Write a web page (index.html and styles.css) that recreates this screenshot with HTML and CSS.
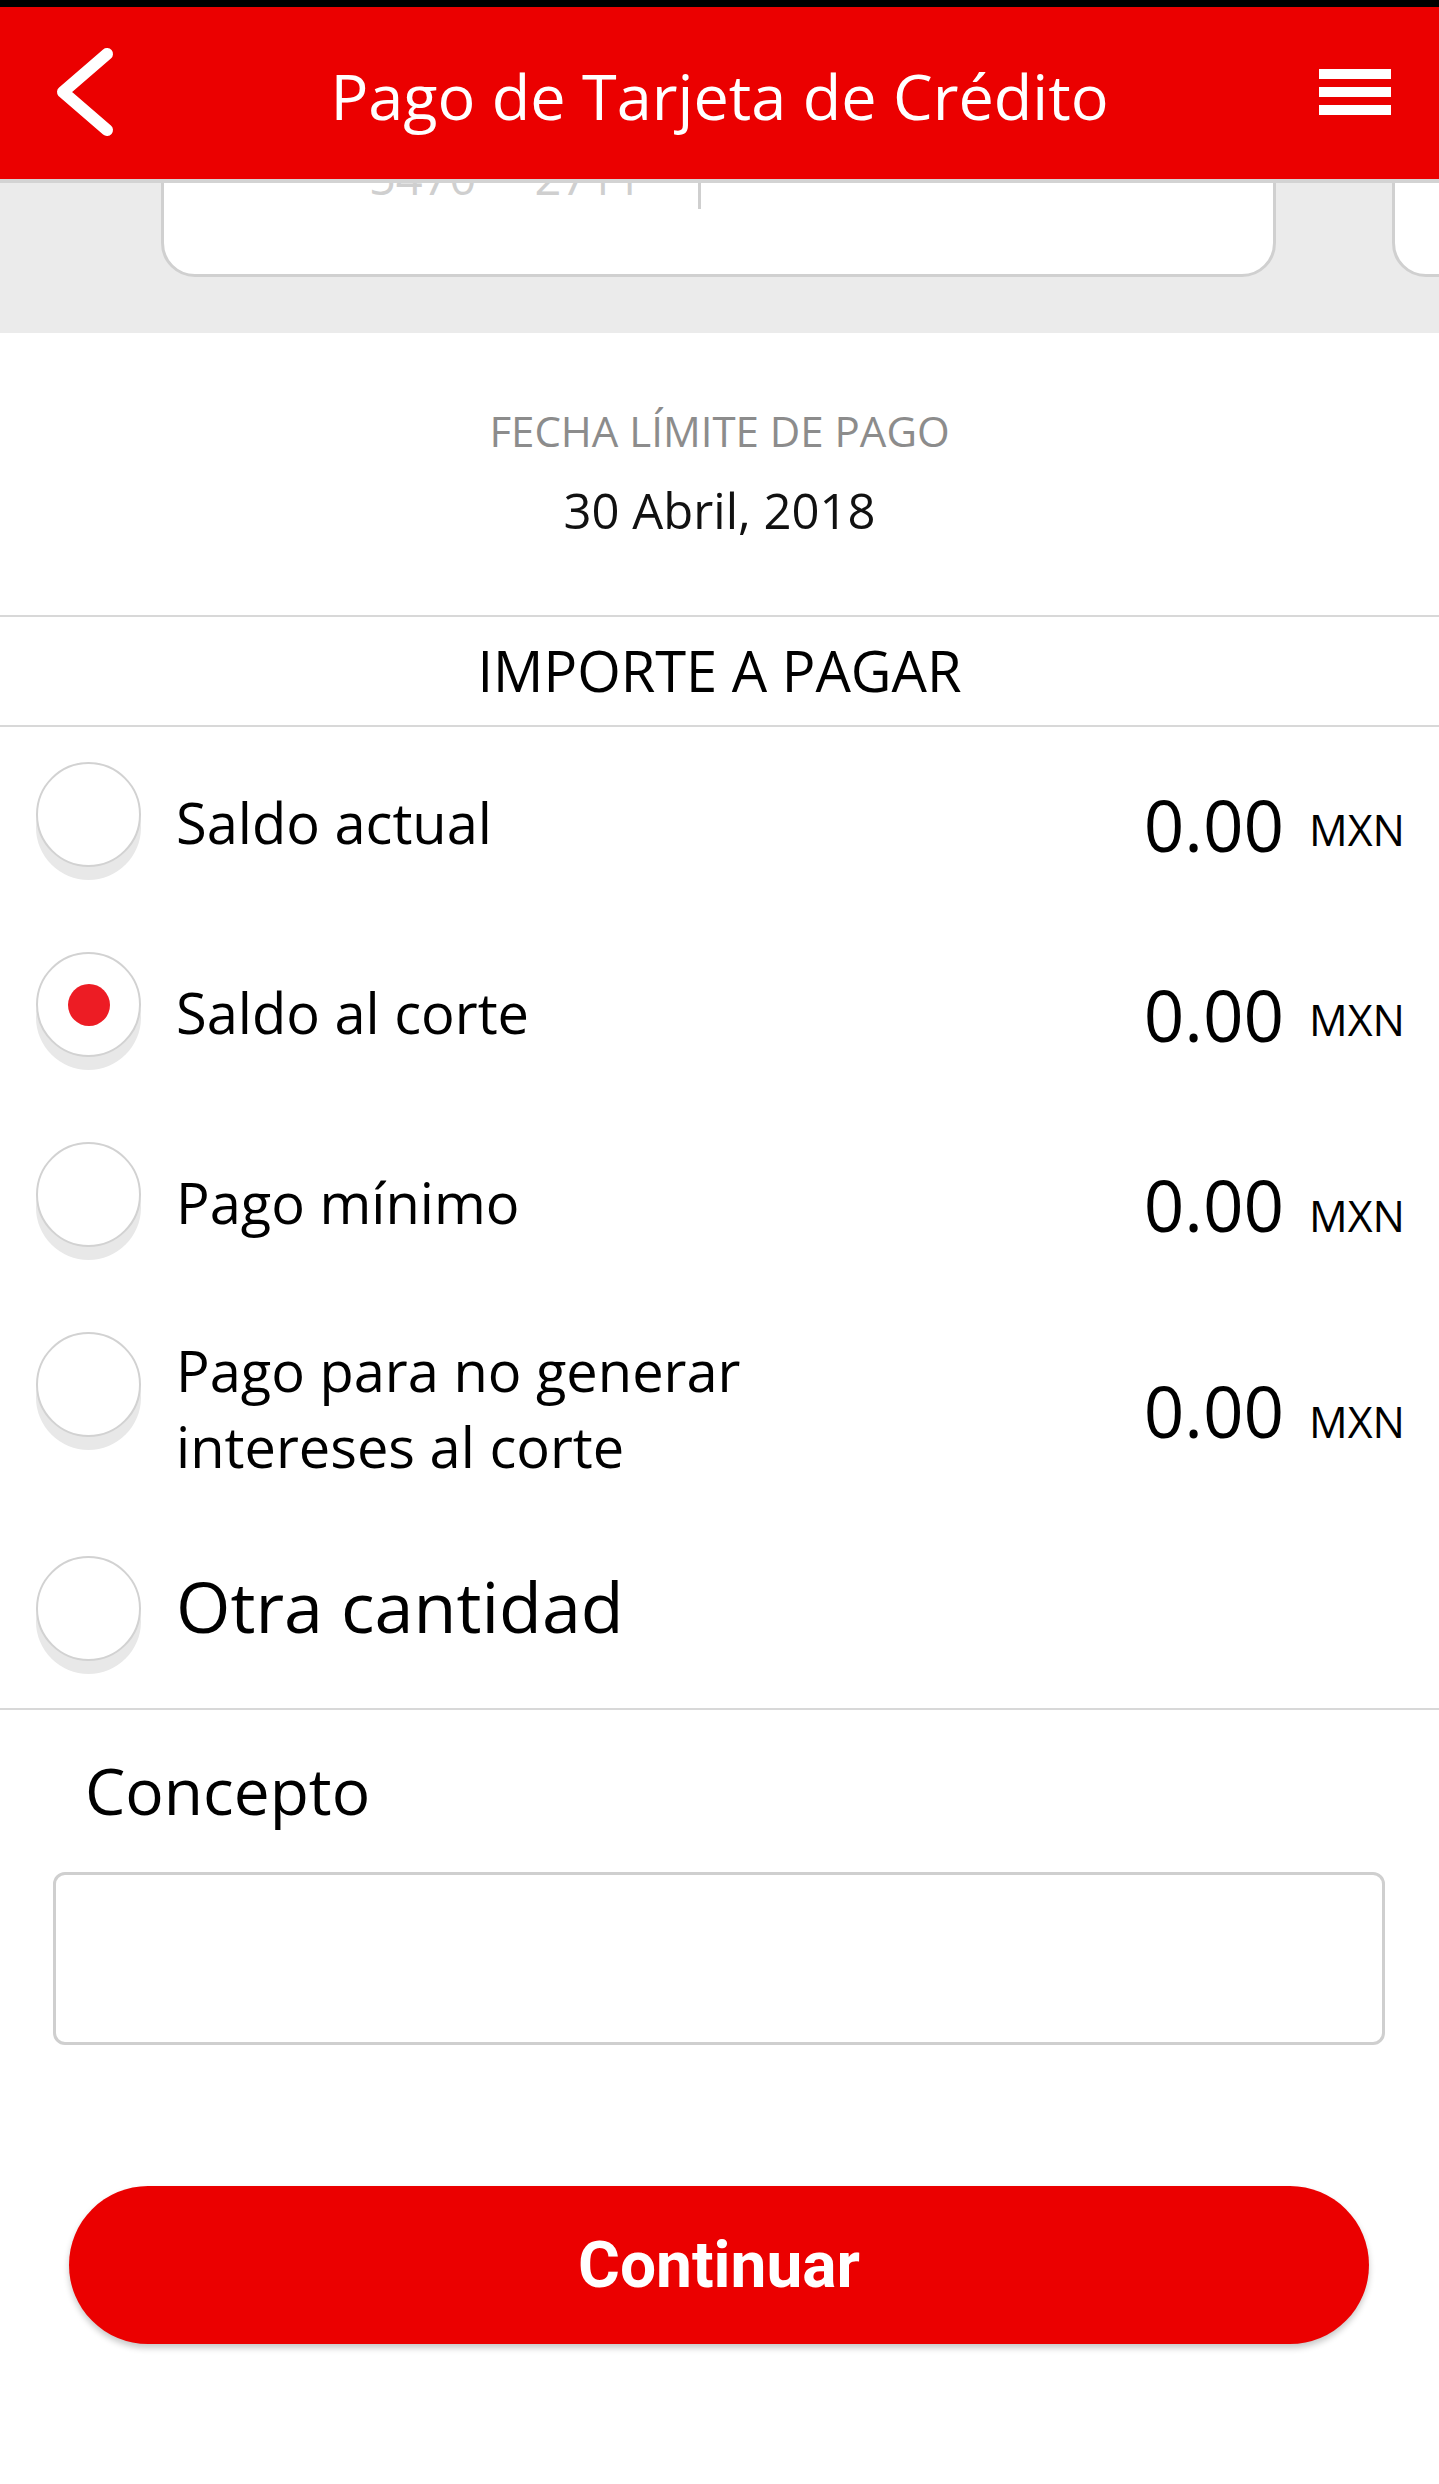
FILE: index.html
```html
<!DOCTYPE html>
<html lang="es">
<head>
<meta charset="utf-8">
<title>Pago de Tarjeta de Crédito</title>
<link rel="stylesheet" href="styles.css">
</head>
<body>
<div class="statusbar"></div>
<header class="topbar">
  <svg class="back" width="120" height="172" viewBox="0 0 120 172" aria-label="Regresar">
    <polyline points="107,47 63,85 107,123" fill="none" stroke="#fff" stroke-width="12" stroke-linecap="round" stroke-linejoin="round"/>
  </svg>
  <h1 class="title">Pago de Tarjeta de Crédito</h1>
  <div class="menu"><span></span><span></span><span></span></div>
</header>

<section class="cards">
  <div class="card">
    <div class="card-row">
      <span class="card-digits">5470</span>
      <span class="card-digits card-digits-last">2711</span>
      <span class="card-sep"></span>
    </div>
  </div>
  <div class="card card-next"></div>
</section>

<section class="due">
  <p class="due-label">FECHA LÍMITE DE PAGO</p>
  <p class="due-date">30 Abril, 2018</p>
</section>

<h2 class="section-title">IMPORTE A PAGAR</h2>

<ul class="options">
  <li class="option">
    <span class="radio"></span>
    <div class="option-body">
      <span class="option-label">Saldo actual</span>
      <span class="amount amount-raised"><span class="amount-value">0.00</span><span class="amount-cur">MXN</span></span>
    </div>
  </li>
  <li class="option">
    <span class="radio radio-checked"><span class="radio-dot"></span></span>
    <div class="option-body">
      <span class="option-label">Saldo al corte</span>
      <span class="amount amount-raised"><span class="amount-value">0.00</span><span class="amount-cur">MXN</span></span>
    </div>
  </li>
  <li class="option">
    <span class="radio"></span>
    <div class="option-body">
      <span class="option-label">Pago mínimo</span>
      <span class="amount"><span class="amount-value">0.00</span><span class="amount-cur">MXN</span></span>
    </div>
  </li>
  <li class="option option-tall">
    <span class="radio"></span>
    <div class="option-body">
      <span class="option-label">Pago para no generar<br>intereses al corte</span>
      <span class="amount"><span class="amount-value">0.00</span><span class="amount-cur">MXN</span></span>
    </div>
  </li>
  <li class="option option-other">
    <span class="radio"></span>
    <div class="option-body">
      <span class="option-label option-label-big">Otra cantidad</span>
    </div>
  </li>
</ul>

<section class="concept">
  <label class="concept-label" for="concepto">Concepto</label>
  <div class="concept-input" id="concepto"></div>
</section>

<div class="actions">
  <button class="btn-primary" type="button">Continuar</button>
</div>
</body>
</html>
```

FILE: styles.css
```css
* { box-sizing: border-box; }

html, body {
  margin: 0;
  padding: 0;
  background: #ffffff;
}

body {
  width: 1439px;
  font-family: "Open Sans", "Noto Sans", sans-serif;
  color: #000;
}

.statusbar {
  height: 7px;
  background: #000;
}

.topbar {
  height: 176px;
  background: #eb0000;
  border-bottom: 4px solid #d3d3d3;
  display: grid;
  grid-template-columns: 1fr auto 1fr;
  align-items: start;
}

.back {
  display: block;
}

.title {
  margin: 0;
  padding-top: 51px;
  font-weight: 400;
  font-size: 63px;
  line-height: 75px;
  color: #fff;
  white-space: nowrap;
}

.menu {
  justify-self: end;
  margin-right: 48px;
  margin-top: 62px;
  width: 72px;
  display: flex;
  flex-direction: column;
  gap: 8px;
}

.menu span {
  display: block;
  height: 10px;
  background: #fff;
}

/* card carousel strip */
.cards {
  height: 150px;
  background: #ebebeb;
  overflow: hidden;
  display: flex;
  align-items: flex-end;
  padding-bottom: 56px;
}

.card {
  flex-shrink: 0;
  width: 1115px;
  height: 200px;
  margin-left: 161px;
  background: #fff;
  border: 3px solid #d0d0d0;
  border-radius: 34px;
  display: flex;
  flex-direction: column;
  justify-content: flex-end;
}

.card-next {
  margin-left: 116px;
}

.card-row {
  display: flex;
  align-items: flex-end;
  padding-left: 205px;
  padding-bottom: 65px;
}

.card-digits {
  font-size: 47px;
  line-height: 47px;
  color: #cfcfcf;
  margin-bottom: 8px;
}

.card-digits-last {
  margin-left: 58px;
}

.card-sep {
  width: 3px;
  height: 60px;
  margin-left: 56px;
  background: #cfcfcf;
}

/* due date */
.due {
  padding: 73px 0 76px;
  text-align: center;
  border-bottom: 2px solid #d8d8d8;
}

.due p { margin: 0; }

.due-label {
  font-size: 42px;
  line-height: 50px;
  color: #8c8c8c;
}

.due-date {
  margin-top: 25px !important;
  font-size: 49px;
  line-height: 58px;
  color: #111;
}

.section-title {
  margin: 0;
  padding: 20px 0 21px;
  text-align: center;
  font-weight: 400;
  font-size: 56px;
  line-height: 67px;
  color: #000;
  border-bottom: 2px solid #d8d8d8;
}

/* options */
.options {
  list-style: none;
  margin: 0;
  padding: 35px 34px 0 36px;
  border-bottom: 2px solid #d8d8d8;
}

.option {
  display: flex;
  align-items: flex-start;
  height: 190px;
}

.option-tall { height: 224px; }
.option-other { height: 152px; }

.radio {
  flex-shrink: 0;
  width: 105px;
  height: 105px;
  border-radius: 50%;
  background: #fff;
  border: 2px solid #d2d2d2;
  box-shadow: 0 13px 0 0 #e8e8e8;
  display: flex;
  align-items: center;
  justify-content: center;
}

.radio-dot {
  width: 42px;
  height: 42px;
  border-radius: 50%;
  background: #ed1c24;
}

.option-body {
  flex: 1;
  display: flex;
  align-items: center;
  justify-content: space-between;
  margin-left: 35px;
  margin-top: 21px;
}

.option-tall .option-body { margin-top: 0; }
.option-other .option-body { margin-top: 8px; }

.option-label {
  font-size: 56px;
  line-height: 76px;
  color: #000;
}

.option-label-big {
  font-size: 70px;
  line-height: 84px;
}

.amount {
  display: flex;
  align-items: baseline;
  white-space: nowrap;
  line-height: 1;
  margin-top: 6px;
}

.amount-value {
  font-size: 71px;
  line-height: 72px;
}

.amount-cur {
  font-size: 43px;
  line-height: 43px;
  margin-left: 25px;
}

.amount-raised .amount-cur {
  position: relative;
  top: -6px;
}

/* concept */
.concept {
  padding-top: 43px;
}

.concept-label {
  display: block;
  padding-left: 85px;
  font-size: 64px;
  line-height: 76px;
  color: #000;
}

.concept-input {
  margin: 43px 0 0 53px;
  width: 1332px;
  height: 173px;
  border: 3px solid #cfcfcf;
  border-radius: 12px;
  background: #fff;
}

/* action */
.actions {
  padding: 141px 0 140px 69px;
}

.btn-primary {
  display: block;
  width: 1300px;
  height: 158px;
  border: 0;
  border-radius: 79px;
  background: #eb0000;
  color: #fff;
  font-family: Roboto, "Liberation Sans", sans-serif;
  font-weight: 700;
  font-size: 64px;
  box-shadow: 0 4px 6px rgba(0, 0, 0, 0.22);
  padding: 0;
}
```
